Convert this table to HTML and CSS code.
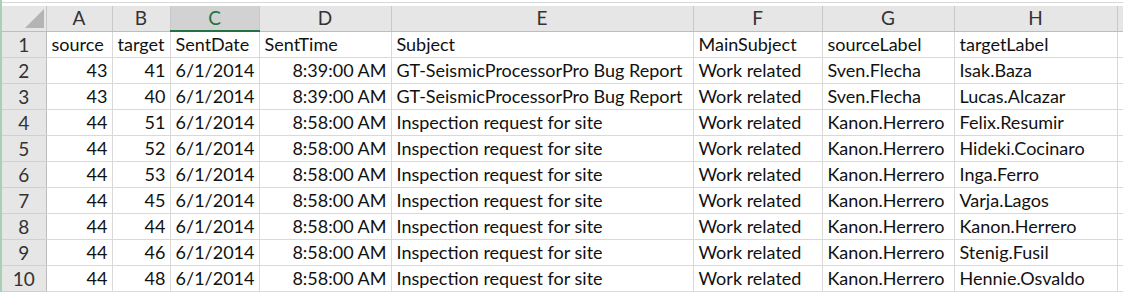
FILE: index.html
```html
<!DOCTYPE html>
<html>
<head>
<meta charset="utf-8">
<link rel="stylesheet" href="styles.css">
</head>
<body>
<div class="sheet">
  <div class="topstrip"></div>
  <table class="grid">
    <colgroup>
      <col class="c-rh"><col class="c-a"><col class="c-b"><col class="c-c"><col class="c-d"><col class="c-e"><col class="c-f"><col class="c-g"><col class="c-h"><col class="c-i">
    </colgroup>
    <thead>
      <tr class="hdr">
        <th class="corner"><span class="tri"></span></th>
        <th>A</th><th>B</th><th class="sel">C</th><th>D</th><th>E</th><th>F</th><th>G</th><th>H</th><th></th>
      </tr>
    </thead>
    <tbody>
      <tr><th>1</th><td>source</td><td>target</td><td>SentDate</td><td>SentTime</td><td>Subject</td><td>MainSubject</td><td>sourceLabel</td><td>targetLabel</td><td></td></tr>
      <tr><th>2</th><td class="n">43</td><td class="n">41</td><td class="n">6/1/2014</td><td class="n">8:39:00 AM</td><td>GT-SeismicProcessorPro Bug Report</td><td>Work related</td><td>Sven.Flecha</td><td>Isak.Baza</td><td></td></tr>
      <tr><th>3</th><td class="n">43</td><td class="n">40</td><td class="n">6/1/2014</td><td class="n">8:39:00 AM</td><td>GT-SeismicProcessorPro Bug Report</td><td>Work related</td><td>Sven.Flecha</td><td>Lucas.Alcazar</td><td></td></tr>
      <tr><th>4</th><td class="n">44</td><td class="n">51</td><td class="n">6/1/2014</td><td class="n">8:58:00 AM</td><td>Inspection request for site</td><td>Work related</td><td>Kanon.Herrero</td><td>Felix.Resumir</td><td></td></tr>
      <tr><th>5</th><td class="n">44</td><td class="n">52</td><td class="n">6/1/2014</td><td class="n">8:58:00 AM</td><td>Inspection request for site</td><td>Work related</td><td>Kanon.Herrero</td><td>Hideki.Cocinaro</td><td></td></tr>
      <tr><th>6</th><td class="n">44</td><td class="n">53</td><td class="n">6/1/2014</td><td class="n">8:58:00 AM</td><td>Inspection request for site</td><td>Work related</td><td>Kanon.Herrero</td><td>Inga.Ferro</td><td></td></tr>
      <tr><th>7</th><td class="n">44</td><td class="n">45</td><td class="n">6/1/2014</td><td class="n">8:58:00 AM</td><td>Inspection request for site</td><td>Work related</td><td>Kanon.Herrero</td><td>Varja.Lagos</td><td></td></tr>
      <tr><th>8</th><td class="n">44</td><td class="n">44</td><td class="n">6/1/2014</td><td class="n">8:58:00 AM</td><td>Inspection request for site</td><td>Work related</td><td>Kanon.Herrero</td><td>Kanon.Herrero</td><td></td></tr>
      <tr><th>9</th><td class="n">44</td><td class="n">46</td><td class="n">6/1/2014</td><td class="n">8:58:00 AM</td><td>Inspection request for site</td><td>Work related</td><td>Kanon.Herrero</td><td>Stenig.Fusil</td><td></td></tr>
      <tr><th>10</th><td class="n">44</td><td class="n">48</td><td class="n">6/1/2014</td><td class="n">8:58:00 AM</td><td>Inspection request for site</td><td>Work related</td><td>Kanon.Herrero</td><td>Hennie.Osvaldo</td><td></td></tr>
    </tbody>
  </table>
</div>
</body>
</html>
```

FILE: styles.css
```css
html, body {
  margin: 0;
  padding: 0;
  background: #ffffff;
  overflow: hidden;
}
.sheet {
  width: 1123px;
  height: 292px;
  border-left: 2px solid #a8d0b4;
  box-sizing: border-box;
  font-family: Lato, "Liberation Sans", sans-serif;
  font-size: 18px;
  color: #111;
}
.topstrip {
  height: 6px;
  box-sizing: border-box;
  border-top: 2px solid #ffffff;
  background: linear-gradient(#d8d8d8, #d8d8d8) 0 0 / 100% 1px no-repeat, #ffffff;
}
.grid {
  border-collapse: collapse;
  table-layout: fixed;
  width: 1121px;
}
.c-rh { width: 44px; }
.c-a { width: 66px; }
.c-b { width: 58px; }
.c-c { width: 89px; }
.c-d { width: 132px; }
.c-e { width: 302px; }
.c-f { width: 129px; }
.c-g { width: 132px; }
.c-h { width: 163px; }
.c-i { width: 6px; }
.hdr th {
  height: 25px;
  padding: 0;
  background: #e6e6e6;
  color: #333;
  font-weight: normal;
  font-size: 19px;
  text-align: center;
  border-left: 1px solid #c8c8c8;
  border-right: 1px solid #c8c8c8;
  border-bottom: 1px solid #bdbdbd;
  box-sizing: border-box;
  line-height: 24px;
}
.hdr th.sel {
  background: #d2d2d2;
  color: #217346;
  border-bottom: 2px solid #217346;
}
.hdr th.corner {
  position: relative;
  border-left: none;
}
.tri {
  position: absolute;
  right: 2px;
  bottom: 3px;
  width: 0;
  height: 0;
  border-left: 19px solid transparent;
  border-bottom: 19px solid #b4b4b4;
}
tbody th {
  height: 26px;
  padding: 0;
  background: #e6e6e6;
  color: #333;
  font-weight: normal;
  font-size: 19px;
  text-align: center;
  border-right: 1px solid #bdbdbd;
  border-bottom: 1px solid #d0d0d0;
  box-sizing: border-box;
  line-height: 25px;
}
td {
  height: 26px;
  padding: 0 4px 0 5px;
  border: 1px solid #d9d9d9;
  white-space: nowrap;
  overflow: hidden;
  box-sizing: border-box;
  line-height: 25px;
}
td.n {
  text-align: right;
}
tbody tr td:last-child {
  border-right: none;
}
```
